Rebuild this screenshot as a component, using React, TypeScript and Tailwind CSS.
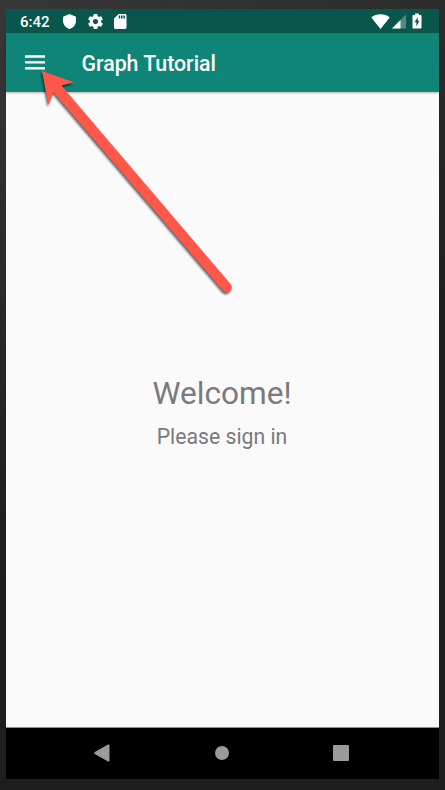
function StatusBar() {
  return (
    <div className="flex h-6 shrink-0 items-center bg-[#09574c] pl-[14px] pr-[17.5px] text-white">
      <span className="w-[43px] pt-px text-[15px] leading-6 font-medium">6:42</span>
      <svg className="h-[15px] w-[13px]" viewBox="3 1 18 22" preserveAspectRatio="none" fill="currentColor">
        <path d="M12 1L3 5v6c0 5.55 3.84 10.74 9 12 5.16-1.26 9-6.45 9-12V5l-9-4z" />
      </svg>
      <svg className="ml-[11.5px] h-[15px] w-[15px]" viewBox="2 2 20 20" preserveAspectRatio="none" fill="currentColor">
        <path d="M19.43 12.98c.04-.32.07-.64.07-.98s-.03-.66-.07-.98l2.11-1.65c.19-.15.24-.42.12-.64l-2-3.46c-.12-.22-.39-.3-.61-.22l-2.49 1c-.52-.4-1.08-.73-1.69-.98l-.38-2.65C14.46 2.18 14.25 2 14 2h-4c-.25 0-.46.18-.49.42l-.38 2.65c-.61.25-1.17.59-1.69.98l-2.49-1c-.23-.09-.49 0-.61.22l-2 3.46c-.13.22-.07.49.12.64l2.11 1.65c-.04.32-.07.65-.07.98s.03.66.07.98l-2.11 1.65c-.19.15-.24.42-.12.64l2 3.46c.12.22.39.3.61.22l2.49-1c.52.4 1.08.73 1.69.98l.38 2.65c.03.24.24.42.49.42h4c.25 0 .46-.18.49-.42l.38-2.65c.61-.25 1.17-.59 1.69-.98l2.49 1c.23.09.49 0 .61-.22l2-3.46c.12-.22.07-.49-.12-.64l-2.11-1.65zM12 15.5c-1.93 0-3.5-1.57-3.5-3.5s1.57-3.5 3.5-3.5 3.5 1.57 3.5 3.5-1.57 3.5-3.5 3.5z" />
      </svg>
      <svg className="ml-[11.5px] h-[15px] w-[12.5px]" viewBox="4 2 16 20" preserveAspectRatio="none" fill="currentColor">
        <path d="M18 2h-8L4.02 8 4 20c0 1.1.9 2 2 2h12c1.1 0 2-.9 2-2V4c0-1.1-.9-2-2-2zm-6 6h-2V4h2v4zm3 0h-2V4h2v4zm3 0h-2V4h2v4z" />
      </svg>
      <svg className="ml-auto h-[15px] w-[19px]" viewBox="0 0 19 15" fill="currentColor">
        <path d="M9.500 15 0.300 3.600C2.800 1.400 6 .3 9.500 .3s6.700 1.100 9.200 3.300z" />
      </svg>
      <svg className="ml-[2px] h-[15px] w-[14px]" viewBox="0 0 14 15" fill="currentColor">
        <path opacity=".3" d="M0 14.500 14 .5v14z" />
        <path d="M0 14.500 8.500 6v8.500z" />
      </svg>
      <svg className="ml-[6px] h-[16px] w-[10px]" viewBox="0 0 10 16" fill="currentColor">
        <path fillRule="evenodd" d="M3 .5h4V2h1.500c.6 0 1 .4 1 1v11.500c0 .6-.4 1-1 1h-7c-.6 0-1-.4-1-1V3c0-.6.4-1 1-1H3zM5.600 4 2.600 9.300h1.800V13.500l3-5.700H5.600z" />
      </svg>
    </div>
  );
}

function AppBar() {
  return (
    <header className="z-10 flex h-[59px] shrink-0 items-center bg-[#0f8577] pl-[19px] text-white shadow-[0_1px_2px_rgba(0,0,0,0.3)]">
      <button className="h-[15px] w-5" aria-label="Open navigation">
        <svg className="h-full w-full" viewBox="0 0 20 15" fill="currentColor">
          <path d="M0 .3h20v2.400H0zM0 6.200h20v2.400H0zM0 12.100h20v2.400H0z" />
        </svg>
      </button>
      <h1 className="ml-[36.500px] pt-[3px] text-[21.300px] leading-7 font-medium">Graph Tutorial</h1>
    </header>
  );
}

function NavigationBar() {
  return (
    <nav className="flex h-[52px] shrink-0 items-center border-t border-[#8f8f8f] bg-black pb-px pl-[88px] text-[#9b9b9b]">
      <svg className="h-[18px] w-4" viewBox="0 0 16 18" fill="currentColor">
        <path d="M.8 8.100 14 .6Q15.500 0 15.500 1.500v15Q15.500 18 14 17.400L.8 9.900Q-.2 9 .8 8.100z" />
      </svg>
      <span className="ml-[105px] size-[14px] rounded-full bg-[#9b9b9b]" />
      <span className="ml-[104px] size-4 rounded-[1px] bg-[#9b9b9b]" />
    </nav>
  );
}

function Pointer() {
  return (
    <svg className="pointer-events-none absolute inset-0 z-20 h-[790px] w-[445px]" viewBox="0 0 445 790">
      <path
        className="drop-shadow-[-1px_2px_1px_rgba(0,0,0,0.6)]"
        fill="#ff584a"
        d="M42 71 74 82.300 61.500 85.500 231 284.500A5.100 5.100 0 0 1 223.300 291L53.500 92.300 48.300 105z"
      />
    </svg>
  );
}

export default function App() {
  return (
    <div className="relative h-[790px] w-[445px] overflow-hidden bg-linear-150 from-[#373737] to-[#1e1e1e] to-55% px-[6px] pt-[9px] pb-[11px] font-[Roboto,sans-serif]">
      <div className="flex h-[770px] flex-col bg-[#fafafa]">
        <StatusBar />
        <AppBar />
        <main className="flex flex-1 flex-col items-center pt-[282px] pr-px text-[#7a7a7a]">
          <h2 className="text-[31.600px] leading-10">Welcome!</h2>
          <p className="mt-[9px] text-[21.200px] leading-7">Please sign in</p>
        </main>
        <NavigationBar />
      </div>
      <Pointer />
    </div>
  );
}
